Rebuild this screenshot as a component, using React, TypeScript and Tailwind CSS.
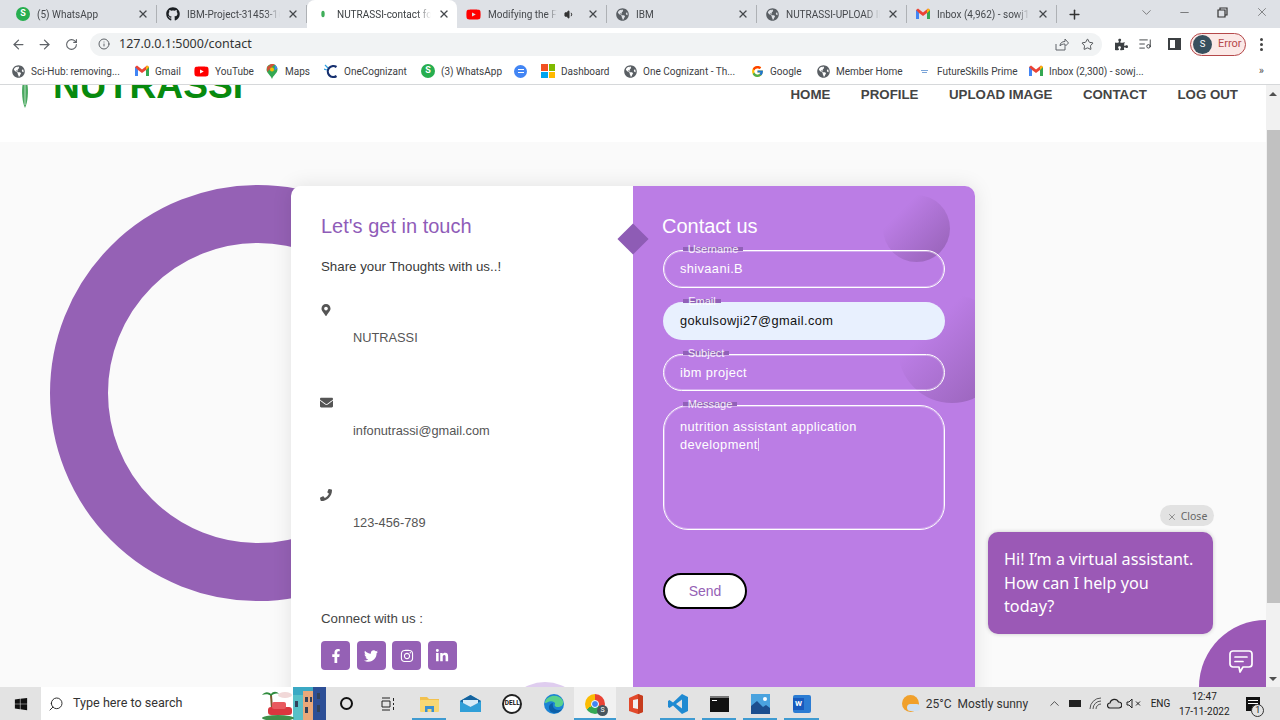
import React from "react";
import { ArrowLeft, ArrowRight, RotateCw, Info, Star, Minus, X, Plus, ChevronDown, ChevronUp, Search, Volume1, ListMusic } from "lucide-react";
import { FaGithub, FaGlobeAmericas, FaMapMarkerAlt, FaEnvelope, FaPhone, FaFacebookF, FaTwitter, FaInstagram, FaLinkedinIn, FaPuzzlePiece, FaWindows, FaYoutube } from "react-icons/fa";
import { FcGoogle } from "react-icons/fc";

const Wa = () => (
  <span className="w-[14px] h-[14px] rounded-full bg-[#27ae4f] text-white text-[9px] font-bold flex items-center justify-center shrink-0">S</span>
);
const Globe = () => <FaGlobeAmericas className="text-[#5a5f64] text-[13px] shrink-0" />;
const Gmail = () => (
  <svg width="14" height="12" viewBox="0 0 14 12" className="shrink-0">
    <path d="M0 2v9h3V5l4 3 4-3v6h3V2L12 0.6 7 4.6 2 0.6Z" fill="#ea4335" />
    <path d="M0 2v9h3V5Z" fill="#4285f4" />
    <path d="M14 2v9h-3V5Z" fill="#34a853" />
    <path d="M11 5V2l1-1.4L14 2Z" fill="#fbbc04" />
  </svg>
);
const Yt = () => <FaYoutube className="text-[#f00] text-[15px] shrink-0" />;
const Leaf = () => (
  <svg width="14" height="14" viewBox="0 0 14 14" className="shrink-0">
    <ellipse cx="7" cy="7" rx="1.7" ry="3.2" fill="#3fae5a" />
  </svg>
);
const Maps = () => (
  <svg width="14" height="15" viewBox="-1 0 14 15" className="shrink-0">
    <path d="M6 0a5.5 5.5 0 0 1 5.5 5.5C11.500 9 7.500 11 6 15 4.500 11 .5 9 .5 5.500A5.500 5.500 0 0 1 6 0Z" fill="#34a853" />
    <path d="M1 3l4-3h4L1 8Z" fill="#ea4335" opacity=".85" />
    <path d="M9 .6l2.500 4-3 2Z" fill="#4285f4" />
    <circle cx="6" cy="5.500" r="2" fill="#fbbc04" />
  </svg>
);
const Oc = () => (
  <svg width="14" height="15" viewBox="0 0 14 15" className="shrink-0">
    <path d="M12.500 3A5.500 5.500 0 1 0 12.500 12" fill="none" stroke="#16306f" strokeWidth="2.200" />
    <path d="M1 1l3 3M0 5l3 1" stroke="#2e9fdf" strokeWidth="1.200" />
  </svg>
);
const Ms = () => (
  <span className="w-[14px] h-[14px] grid grid-cols-2 gap-[1px] shrink-0">
    <span className="bg-[#f25022]" /><span className="bg-[#7fba00]" /><span className="bg-[#00a4ef]" /><span className="bg-[#ffb900]" />
  </span>
);
const BlueDoc = () => (
  <span className="w-[13px] h-[13px] rounded-full bg-[#4285f4] flex items-center justify-center shrink-0">
    <span className="w-[6px] h-[4px] border-y border-white" />
  </span>
);
const Fs = () => (
  <span className="w-[14px] flex flex-col items-center gap-[1px] shrink-0">
    <span className="w-[7px] h-[1px] bg-[#7aa4d8]" /><span className="w-[5px] h-[1px] bg-[#7aa4d8]" />
  </span>
);

const tabs = [
  { icon: <Wa />, title: "(5) WhatsApp" },
  { icon: <FaGithub className="text-[#1b1f23] text-[14px] shrink-0" />, title: "IBM-Project-31453-16" },
  { icon: <Leaf />, title: "NUTRASSI-contact for", active: true },
  { icon: <Yt />, title: "Modifying the Fla", audio: true },
  { icon: <Globe />, title: "IBM" },
  { icon: <Globe />, title: "NUTRASSI-UPLOAD IN" },
  { icon: <Gmail />, title: "Inbox (4,962) - sowj19" },
];

const bookmarks = [
  { icon: <Globe />, t: "Sci-Hub: removing...", cls: "w-[123px]" },
  { icon: <Gmail />, t: "Gmail", cls: "w-[59px]" },
  { icon: <Yt />, t: "YouTube", cls: "w-[71px]" },
  { icon: <Maps />, t: "Maps", cls: "w-[59px]" },
  { icon: <Oc />, t: "OneCognizant", cls: "w-[97px]" },
  { icon: <Wa />, t: "(3) WhatsApp", cls: "w-[93px]" },
  { icon: <BlueDoc />, t: "", cls: "w-[27px]" },
  { icon: <Ms />, t: "Dashboard", cls: "w-[83px]" },
  { icon: <Globe />, t: "One Cognizant - Th...", cls: "w-[127px]" },
  { icon: <FcGoogle className="text-[13px] shrink-0" />, t: "Google", cls: "w-[66px]" },
  { icon: <Globe />, t: "Member Home", cls: "w-[100px]" },
  { icon: <Fs />, t: "FutureSkills Prime", cls: "w-[112px]" },
  { icon: <Gmail />, t: "Inbox (2,300) - sowj...", cls: "w-[120px]" },
];

function Chrome() {
  return (
    <div className="font-['Roboto',sans-serif] shrink-0">
      <div className="h-[28px] bg-[#dee1e6] flex items-end pl-[7px] text-[#45484c]">
        {tabs.map((t) => (
          <div
            key={t.title}
            className={
              t.active
                ? "w-[150px] h-[28px] bg-white rounded-t-[8px] flex items-center pl-[9px] pr-[7px] gap-[7px] text-[#3c4043]"
                : "w-[150px] h-[28px] flex items-center pl-[9px] pr-[7px] gap-[7px] border-r border-r-[#aeb1b5] [border-image:linear-gradient(transparent_6px,#aeb1b5_6px,#aeb1b5_22px,transparent_22px)_1]"
            }
          >
            {t.icon}
            <span className="flex-1 overflow-hidden whitespace-nowrap text-[10px] pt-[1px] [mask-image:linear-gradient(90deg,#000_85%,transparent)]">{t.title}</span>
            {t.audio && <Volume1 size={11} className="text-[#333] shrink-0 mr-[5px]" fill="#333" />}
            <X size={12} strokeWidth={2.6} className="text-[#45484c] shrink-0" />
          </div>
        ))}
        <Plus size={15} strokeWidth={2.4} className="text-[#333] ml-[10px] mb-[6px]" />
        <div className="ml-auto flex items-center h-[28px] pr-[11px] text-[#444] -translate-y-[2px]">
          <ChevronDown size={15} strokeWidth={1} className="mr-[24px]" />
          <Minus size={13} strokeWidth={1.2} className="mr-[26px]" />
          <svg width="11" height="11" viewBox="0 0 11 11" fill="none" stroke="#333" strokeWidth="1.200" className="mr-[27px]">
            <path d="M3 3V1h7v7H8M1 3h7v7H1Z" />
          </svg>
          <X size={14} strokeWidth={1} />
        </div>
      </div>
      <div className="h-[30px] pt-[2px] bg-white flex items-center text-[#5f6368]">
        <ArrowLeft size={15} strokeWidth={2} className="ml-[11px]" />
        <ArrowRight size={15} strokeWidth={2} className="ml-[11px]" />
        <RotateCw size={13} strokeWidth={2} className="ml-[13px]" />
        <div className="ml-[12px] w-[1012px] h-[23px] rounded-full bg-[#f1f3f4] flex items-center pl-[8px] pr-[8px]">
          <Info size={12} strokeWidth={2} />
          <span className="ml-[9px] text-[12.5px] text-[#333] font-['Noto_Sans',sans-serif]">127.0.0.1:5000/contact</span>
          <svg width="14" height="13" viewBox="0 0 14 13" className="ml-auto mr-[12px]" fill="none" stroke="#5f6368" strokeWidth="1">
            <path d="M1 6v6h9V9M5 8c0-3 2-4.500 5-4.500V1l3.500 4L10 8.500V6C8 6 6 6.500 5 8Z" />
          </svg>
          <Star size={13} strokeWidth={1.6} className="text-[#3c4043]" />
        </div>
        <FaPuzzlePiece className="ml-[13px] text-[13px] text-[#3c4043]" />
        <ListMusic size={14} strokeWidth={1.6} className="ml-[10px] text-[#3c4043]" />
        <span className="ml-[16px] w-[13px] h-[12px] border-2 border-[#3c4043] border-r-[6px]" />
        <div className="ml-[9px] w-[56px] h-[23px] rounded-full border border-[#b5484a] bg-[#fbe9e7] flex items-center pl-[2px]">
          <span className="w-[19px] h-[19px] rounded-full bg-[#37505e] text-white text-[9.5px] flex items-center justify-center">S</span>
          <span className="ml-[6px] text-[11px] text-[#b5484a]">Error</span>
        </div>
        <span className="ml-[14px] flex flex-col gap-[2px]">
          <span className="w-[3px] h-[3px] rounded-full bg-[#444]" />
          <span className="w-[3px] h-[3px] rounded-full bg-[#444]" />
          <span className="w-[3px] h-[3px] rounded-full bg-[#444]" />
        </span>
      </div>
      <div className="h-[27px] bg-white border-b border-[#d6d8da] flex items-center pl-[12px] text-[#3c4043]">
        {bookmarks.map((b, i) => (
          <div key={i} className={b.cls + " flex items-center gap-[6px] overflow-hidden shrink-0"}>
            {b.icon}
            <span className="whitespace-nowrap text-[10px]">{b.t}</span>
          </div>
        ))}
        <span className="ml-auto mr-[16px] text-[11px] text-[#555]">»</span>
      </div>
    </div>
  );
}

function Field({ label, value, labelW, filled, children, tall, short }: { label: string; value?: string; labelW: string; filled?: boolean; children?: React.ReactNode; tall?: boolean; short?: boolean }) {
  const line = "border border-white shadow-[inset_0_0_0_1px_rgba(255,255,255,0.35)] text-white";
  const box = filled
    ? "h-[38px] rounded-[25px] bg-[#e8f0fe] text-[#111] flex items-center pl-[17px]"
    : tall
    ? "h-[125px] rounded-[25px] pt-[12px] pl-[16px] " + line
    : (short ? "h-[37px]" : "h-[38px]") + " rounded-[25px] flex items-center pl-[16px] " + line;
  return (
    <div className="relative w-[282px]">
      <div className={box + " text-[12.8px] tracking-[0.4px] leading-[18px] font-medium"}>
        {value}
        {children}
      </div>
      <div className={"absolute left-[20px] -top-[7px] h-[12px] flex items-center justify-center " + labelW}>
        <span className="absolute left-0 right-0 top-[4px] h-[4px] bg-[#9161b8]" />
        <span className="relative text-[11px] leading-[12px] text-white/90">{label}</span>
      </div>
    </div>
  );
}

const contacts = [
  { icon: <FaMapMarkerAlt className="text-[12px] ml-[-1px]" />, t: "NUTRASSI" },
  { icon: <FaEnvelope className="text-[13px] ml-[-1px]" />, t: "infonutrassi@gmail.com" },
  { icon: <FaPhone className="text-[12px] ml-[-1px]" />, t: "123-456-789" },
];

const socials = [<FaFacebookF />, <FaTwitter />, <FaInstagram />, <FaLinkedinIn />];

function Page() {
  return (
    <div className="flex-1 min-h-0 flex overflow-hidden font-['Liberation_Sans',sans-serif]">
      <div className="flex-1 min-w-0 flex flex-col">
        <header className="h-[57px] bg-white flex items-start shrink-0 overflow-hidden">
          <svg width="8" height="23" viewBox="0 0 8 23" className="ml-[21px] shrink-0">
            <path d="M4 23C1 17 .5 6 1.500 0h5C7.500 6 7 17 4 23Z" fill="#4aa860" />
            <path d="M4 20V0" stroke="#b8e0c0" strokeWidth="1" />
          </svg>
          <span className="ml-[24px] -mt-[21px] text-[37.2px] leading-[42px] font-bold text-[#078a0e]">NUTRASSI</span>
          <nav className="ml-auto mr-[28px] mt-[2px] flex gap-[30.5px] text-[13.3px] leading-[15px] font-bold text-[#444]">
            <span>HOME</span>
            <span>PROFILE</span>
            <span>UPLOAD IMAGE</span>
            <span>CONTACT</span>
            <span>LOG OUT</span>
          </nav>
        </header>
        <main className="flex-1 min-h-0 bg-[#fafafa] relative overflow-hidden pl-[291px] pt-[44px]">
          <div className="absolute left-[50px] top-[43px] w-[416px] h-[416px] rounded-full border-[58px] border-[#9561b5]" />
          <div className="relative w-[684px] h-[640px] flex rounded-[10px] shadow-[0_0_20px_rgba(0,0,0,0.1)]">
            <section className="w-[342px] bg-white rounded-l-[10px] pl-[30px] pt-[28px] text-[#555] relative overflow-hidden">
              <h2 className="text-[20px] leading-[24px] text-[#8f5cb8]">Let's get in touch</h2>
              <p className="mt-[20px] text-[13.3px] leading-[18px] text-[#3a3a3a]">Share your Thoughts with us..!</p>
              <div className="mt-[26px] flex flex-col gap-[48.500px]">
                {contacts.map((c) => (
                  <div key={c.t} className="h-[44px]">
                    <div className="h-[16px] flex items-center">{c.icon}</div>
                    <div className="mt-[12px] ml-[32px] text-[12.8px] leading-[16px]">{c.t}</div>
                  </div>
                ))}
              </div>
              <p className="mt-[79px] text-[13.3px] leading-[18px] text-[#444]">Connect with us :</p>
              <div className="mt-[13px] flex gap-[6.500px]">
                {socials.map((s, i) => (
                  <span key={i} className="w-[29px] h-[29px] rounded-[4px] bg-[#9561b5] text-white text-[14px] flex items-center justify-center">{s}</span>
                ))}
              </div>
              <span className="absolute left-[212px] top-[496px] w-[84px] h-[84px] rounded-full bg-[#dfcdef]" />
            </section>
            <section className="w-[342px] bg-[#bb7de5] rounded-tr-[10px] rounded-br-[10px] pl-[29px] pt-[28px] relative overflow-hidden">
              <span className="absolute left-[250px] top-[9px] w-[67px] h-[67px] rounded-full bg-gradient-to-br from-[#bb7de5] from-[25%] to-[#9561b5]" />
              <span className="absolute left-[265px] top-[109px] w-[108px] h-[108px] rounded-full bg-gradient-to-br from-[#bb7de5] from-[30%] to-[#9561b5]" />
              <h2 className="relative text-[20px] leading-[24px] text-white">Contact us</h2>
              <div className="relative mt-[12px] ml-[1px] flex flex-col">
                <Field label="Username" value="shivaani.B" labelW="w-[60px]" />
                <div className="h-[14px]" />
                <Field label="Email" value="gokulsowji27@gmail.com" labelW="w-[38px]" filled />
                <div className="h-[14px]" />
                <Field label="Subject" value="ibm project" labelW="w-[46px]" short />
                <div className="h-[14px]" />
                <Field label="Message" labelW="w-[54px]" tall>
                  nutrition assistant application
                  <br />
                  development
                  <span className="inline-block w-[1px] h-[13px] bg-white/70 align-[-2px]" />
                </Field>
              </div>
              <button className="relative mt-[43px] ml-[1px] w-[84px] h-[36px] rounded-[25px] bg-white border-2 border-black text-[14px] text-[#9561b5]">Send</button>
            </section>
            <span className="absolute left-[330.500px] top-[42px] w-[22px] h-[22px] rotate-45 bg-[#8e5cb5]" />
          </div>
          <div className="absolute right-[52px] bottom-[161px] w-[54px] h-[21px] pt-[2px] rounded-full bg-[#e2e2e2] flex items-center justify-center gap-[4px] text-[#666] text-[10.5px] font-['Noto_Sans',sans-serif]">
            <X size={10} strokeWidth={1.6} />
            <span>Close</span>
          </div>
          <div className="absolute right-[53px] bottom-[53px] w-[225px] h-[102px] rounded-[10px] bg-[#9b59b6] shadow-[0_0_4px_rgba(0,0,0,0.2)] text-white text-[16.2px] leading-[23.500px] pl-[16px] pr-[18px] pt-[16px] font-['Noto_Sans',sans-serif]">
            Hi! I’m a virtual assistant. How can I help you today?
          </div>
          <div className="absolute right-0 bottom-0 w-[67px] h-[67px] rounded-tl-full bg-[#9b59b6]">
            <svg width="26" height="26" viewBox="0 0 26 26" className="absolute left-[29px] top-[29px]" fill="none" stroke="#fff" strokeWidth="1.700" strokeLinecap="round" strokeLinejoin="round">
              <path d="M5 2h16a3 3 0 0 1 3 3v10a3 3 0 0 1-3 3h-6l-3 5-1-5H5a3 3 0 0 1-3-3V5a3 3 0 0 1 3-3Z" />
              <path d="M7 8h12M7 12.500h8" />
            </svg>
          </div>
        </main>
      </div>
      <aside className="w-[14px] bg-[#f1f1f1] flex flex-col items-center shrink-0">
        <span className="h-[17px] flex items-center justify-center">
          <span className="w-0 h-0 border-x-[4px] border-x-transparent border-b-[4px] border-b-[#505050]" />
        </span>
        <span className="mt-[28px] ml-[1px] w-[13px] h-[473px] bg-[#c1c1c1]" />
        <span className="mt-auto h-[17px] flex items-center justify-center">
          <span className="w-0 h-0 border-x-[4px] border-x-transparent border-t-[4px] border-t-[#505050]" />
        </span>
      </aside>
    </div>
  );
}

const Slot = ({ children, line, lit }: { children: React.ReactNode; line?: boolean; lit?: boolean }) => (
  <div className={(lit ? "bg-[#f1f1f1] " : "") + "relative w-[41.400px] h-[33px] flex items-center justify-center shrink-0"}>
    {children}
    {line && <span className={(lit ? "left-0 right-0" : "left-[3px] right-[4px]") + " absolute bottom-0 h-[2px] bg-[#3f9bd1]"} />}
  </div>
);

function Taskbar() {
  return (
    <footer className="h-[33px] bg-[#e3e3e3] flex items-center shrink-0 text-[#222] font-['Roboto',sans-serif]">
      <div className="w-[41px] flex justify-center">
        <FaWindows className="text-[14px] text-[#111]" />
      </div>
      <div className="w-[285px] h-[33px] bg-white flex items-center pl-[7px] overflow-hidden">
        <Search size={16} strokeWidth={1.4} className="-scale-x-100 text-[#222]" />
        <span className="ml-[9px] text-[12.6px] text-[#333]">Type here to search</span>
        <svg width="66" height="33" viewBox="0 0 66 33" className="ml-auto shrink-0">
          <rect x="33" width="33" height="33" fill="#3ba9c4" />
          <rect x="33" y="8" width="10" height="25" fill="#58c0c8" />
          <rect x="43" y="4" width="10" height="29" fill="#e9a87a" />
          <rect x="53" y="0" width="13" height="33" fill="#2d4f96" />
          <path d="M35 14h3v6h-3ZM45 10h3v5h-3ZM50 10h2v5h-2ZM45 20h3v6h-3ZM57 6h3v6h-3ZM57 18h3v7h-3Z" fill="#31425c" />
          <path d="M10 8l1 14h2l-1-14Z" fill="#7a5a30" />
          <path d="M2 8c3-4 7-3 9-1 2-3 6-3 8 0-3-1-6 0-8 2-2-2-6-2-9-1Z" fill="#2e8b3c" />
          <ellipse cx="25" cy="8" rx="7" ry="3" fill="#f1d8d8" />
          <rect x="8" y="20" width="24" height="8" rx="3" fill="#d9363e" />
          <rect x="12" y="15" width="14" height="7" rx="2" fill="#e85a5f" />
          <ellipse cx="18" cy="31" rx="16" ry="3" fill="#3f8f4a" />
        </svg>
      </div>
      <div className="flex">
        <Slot><span className="w-[13px] h-[13px] rounded-full border-2 border-[#111]" /></Slot>
        <Slot>
          <svg width="14" height="14" viewBox="0 0 14 14" fill="none" stroke="#222" strokeWidth="1">
            <path d="M1 1h8M1 13h8M1 4h8v6H1ZM12.500 1v3M12.500 6v2M12.500 10v3" />
          </svg>
        </Slot>
        <Slot line>
          <svg width="19" height="16" viewBox="0 0 19 16">
            <path d="M0 1h7l2 2h10v3H0Z" fill="#f2c14e" />
            <rect y="4" width="19" height="12" rx="1" fill="#f7d774" />
            <path d="M5 16V10h9v6h-2.500v-3h-4v3Z" fill="#3a8fd1" />
          </svg>
        </Slot>
        <Slot>
          <svg width="21" height="17" viewBox="0 0 21 17">
            <path d="M0 6 10.500 0 21 6v11H0Z" fill="#2f9fd8" />
            <path d="M0 6l10.500 6L21 6 10.500 0Z" fill="#16639e" />
            <path d="M3 5h15v3l-7.500 4L3 8Z" fill="#d6ecf8" />
          </svg>
        </Slot>
        <Slot>
          <span className="w-[20px] h-[20px] rounded-full border-2 border-[#222] bg-white text-[6.500px] font-bold flex items-center justify-center text-[#111]">DELL</span>
        </Slot>
        <Slot>
          <svg width="20" height="20" viewBox="0 0 20 20">
            <circle cx="10" cy="10" r="10" fill="#1b83d4" />
            <path d="M1 8C3 1 15-1 19 7c1 4-2 6-5 6-3 0-4-2-3-3 1-2-4-4-7-2-2 1-3 2-3 0Z" fill="#5ad18c" />
            <path d="M7 18c-3-3-3-8 2-9-1 3 1 7 5 7 2 0 3 0 4-1-2 4-7 5-11 3Z" fill="#0c5fa8" />
          </svg>
        </Slot>
        <Slot line lit>
          <span className="relative w-[20px] h-[20px] rounded-full block">
            <span className="absolute inset-0 rounded-full bg-[conic-gradient(#ea4335_0_33%,#34a853_33%_66%,#fbbc04_66%_100%)]" />
            <span className="absolute left-[6px] top-[6px] w-[8px] h-[8px] rounded-full bg-[#4285f4] border border-white" />
            <span className="absolute -right-[3px] -bottom-[2px] w-[11px] h-[11px] rounded-full bg-[#47555e] text-white text-[7px] flex items-center justify-center">S</span>
          </span>
        </Slot>
        <Slot>
          <svg width="16" height="20" viewBox="0 0 16 20">
            <path d="M1 4l9-4 5 2v16l-5 2-9-3Z" fill="#e2492b" />
            <path d="M5 6l5-1v10l-5-1Z" fill="#f1f1f1" />
            <path d="M10 0l5 2v16l-5 2Z" fill="#c63c1d" />
          </svg>
        </Slot>
        <Slot line>
          <svg width="20" height="20" viewBox="0 0 20 20">
            <path d="M14 0 20 3v14l-6 3L5 11.500 1.500 14 0 13V7l1.500-1L5 8.500Z" fill="#1f8ad2" />
            <path d="M14 5.500 8 10l6 4.500Z" fill="#e3e3e3" />
          </svg>
        </Slot>
        <Slot line>
          <span className="w-[19px] h-[16px] bg-[#111] border-t-2 border-[#777] block relative">
            <span className="absolute left-[2px] top-[2px] w-[5px] h-[1px] bg-white" />
          </span>
        </Slot>
        <Slot line>
          <svg width="19" height="20" viewBox="0 0 19 20">
            <rect width="19" height="20" fill="#4aa3df" />
            <path d="M0 20V12l6-5 6 6 3-2 4 3v6Z" fill="#1c4f8f" />
            <circle cx="14" cy="5" r="2" fill="#fff" />
          </svg>
        </Slot>
        <Slot line>
          <span className="w-[18px] h-[18px] rounded-[2px] bg-[#2b7cd3] relative block">
            <span className="absolute left-0 top-[3px] w-[11px] h-[12px] bg-[#185abd] text-white text-[8px] font-bold flex items-center justify-center">W</span>
          </span>
        </Slot>
      </div>
      <div className="ml-[79px] flex items-center">
        <span className="w-[17px] h-[17px] rounded-full bg-[#f0a02c] relative shrink-0">
          <span className="absolute left-[5px] top-[9px] w-[13px] h-[7px] rounded-full bg-[#cfe0f2]" />
        </span>
        <span className="ml-[7px] text-[12px] text-[#333] whitespace-nowrap w-[112px]">25°C&nbsp; Mostly sunny</span>
      </div>
      <ChevronUp size={15} strokeWidth={1.2} className="ml-[9px] text-[#222]" />
      <span className="ml-[7px] w-[12px] h-[7px] border border-[#222] border-r-[4px] bg-[#222]" />
      <svg width="13" height="13" viewBox="0 0 13 13" className="ml-[8px]" fill="none" stroke="#555" strokeWidth="1">
        <path d="M1 12A11 11 0 0 1 12 1M4 12a8 8 0 0 1 8-8M7 12a5 5 0 0 1 5-5" />
      </svg>
      <svg width="15" height="11" viewBox="0 0 15 11" className="ml-[5px]" fill="#d8d8d8" stroke="#222" strokeWidth="1.200">
        <path d="M3 10a2.500 2.500 0 0 1 0-5 4.500 4.500 0 0 1 8.500-1A3 3 0 0 1 12 10Z" />
      </svg>
      <svg width="16" height="11" viewBox="0 0 16 11" className="ml-[4px]" fill="none" stroke="#222" strokeWidth="1">
        <path d="M1 4h2l3-3v9L3 7H1ZM10 3.500l4 4M14 3.500l-4 4" />
      </svg>
      <span className="ml-[9px] text-[10px] text-[#222]">ENG</span>
      <div className="ml-[8px] w-[52px] flex flex-col items-center text-[10px] leading-[15px] text-[#222]">
        <span>12:47</span>
        <span className="whitespace-nowrap">17-11-2022</span>
      </div>
      <span className="ml-[16px] relative w-[14px] h-[14px] bg-[#111] block">
        <span className="absolute left-[2px] top-[3px] w-[10px] h-[1px] bg-white" />
        <span className="absolute left-[2px] top-[6px] w-[10px] h-[1px] bg-white" />
        <span className="absolute left-[5px] top-[7px] w-[13px] h-[13px] rounded-full border border-[#333] bg-[#e3e3e3] text-[9px] leading-[11px] text-center">1</span>
      </span>
    </footer>
  );
}

export default function App() {
  return (
    <div className="w-[1280px] h-[720px] flex flex-col overflow-hidden bg-white font-['Noto_Sans',sans-serif]">
      <Chrome />
      <Page />
      <Taskbar />
    </div>
  );
}
